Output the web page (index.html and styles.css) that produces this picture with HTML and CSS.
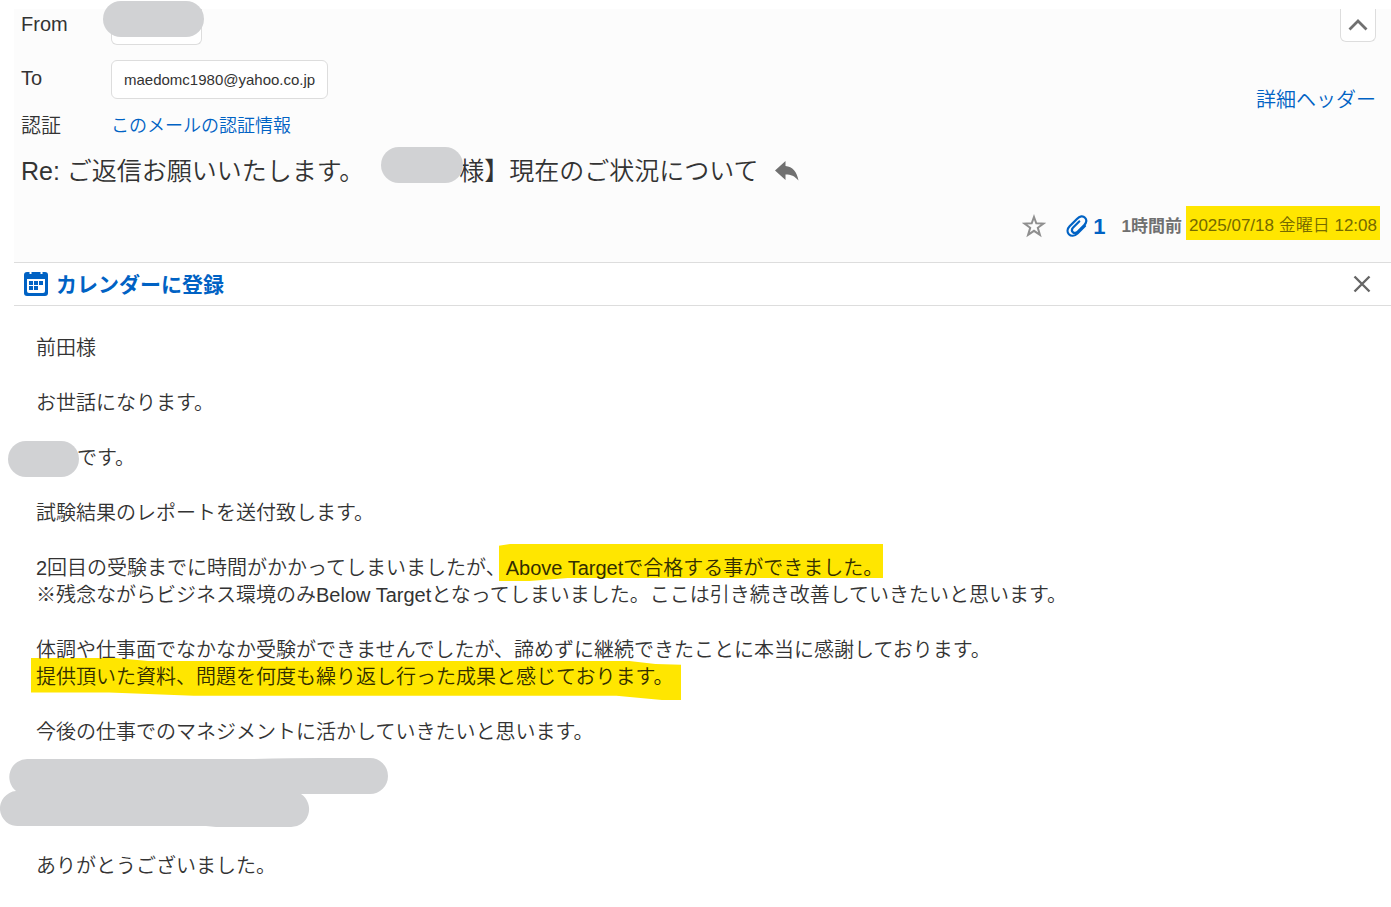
FILE: index.html
```html
<!DOCTYPE html>
<html lang="ja">
<head>
    <meta charset="UTF-8">
    <meta name="viewport" content="width=device-width, initial-scale=1.0">
    <title>メール</title>
    <link rel="stylesheet" href="styles.css">
</head>
<body>
    <main class="mail">
        <header class="mail-header">
            <div class="header-top">
                <div class="fields">
                    <div class="field field-from">
                        <span class="label">From</span>
                        <span class="chip chip-hidden"><span class="mask mask-from"></span></span>
                    </div>
                    <div class="field field-to">
                        <span class="label">To</span>
                        <span class="chip">maedomc1980@yahoo.co.jp</span>
                    </div>
                    <div class="field">
                        <span class="label">認証</span>
                        <a class="auth-link" href="#">このメールの認証情報</a>
                    </div>
                </div>
                <div class="header-side">
                    <button class="collapse" type="button" aria-label="閉じる">
                        <svg width="20" height="12" viewBox="0 0 20 12"><path d="M1.500 10.500 10 2l8.500 8.500" fill="none" stroke="#707070" stroke-width="2.800"/></svg>
                    </button>
                    <a class="detail-link" href="#">詳細ヘッダー</a>
                </div>
            </div>

            <h1 class="subject">
                <span>Re: ご返信お願いいたします。</span>
                <span class="mask mask-subject"></span>
                <span>様】現在のご状況について</span>
                <svg class="reply" width="24" height="20" viewBox="0 0 24 20"><path d="M0 9.500 10.500 0v5C17.500 5.500 22 11 23.500 19.500 19.500 15 16 13.500 10.500 13.500V19z" fill="#707070"/></svg>
            </h1>

            <div class="meta">
                <button class="star" type="button" aria-label="スター">
                    <svg width="24" height="24" viewBox="0 0 24 24"><path d="M12 3 14.300 9.300 21.500 9.600 15.800 13.800 17.900 20.800 12 16.800 6.100 20.800 8.200 13.800 2.500 9.600 9.700 9.300z" fill="none" stroke="#8f8f8f" stroke-width="2"/></svg>
                </button>
                <span class="attach">
                    <svg width="22" height="22" viewBox="0 0 22 22"><path d="M19 11 11.500 18.500C8.500 21.400 4.900 21.300 2.900 19.200.9 17 1.200 13.800 3.600 11.300L10.900 3.900C13.700 1 17 .6 19 2.700c2 2 1.700 4.900-.7 7.300l-6.500 6.500c-1.700 1.700-3.700 1.900-5 .6-1.300-1.300-1-3.200.6-4.800l5.800-5.900" fill="none" stroke="#0062c4" stroke-width="2.200" stroke-linecap="round"/></svg>
                    <span>1</span>
                </span>
                <span class="ago">1時間前</span>
                <time class="date" datetime="2025-07-18T12:08">2025/07/18 金曜日 12:08</time>
            </div>
        </header>

        <div class="calendar-bar">
            <a class="calendar-link" href="#">
                <svg width="24" height="24" viewBox="0 0 24 24">
                    <rect width="24" height="24" rx="3" fill="#0062c4"/>
                    <path d="M5.500 0h2v2h-2zM16.500 0h2v2h-2z" fill="#fff"/>
                    <path d="M3 7h18v12q0 2-2 2H5q-2 0-2-2z" fill="#fff"/>
                    <path d="M5 9h4v4H5zM10 9h4v4h-4zM15 9h4v4h-4zM5 14h4v4H5zM10 14h4v4h-4z" fill="#0062c4"/>
                </svg>
                カレンダーに登録
            </a>
            <button class="close" type="button" aria-label="閉じる">
                <svg width="18" height="18" viewBox="0 0 18 18"><path d="M1.500 1.500l15 15M16.500 1.500l-15 15" fill="none" stroke="#666" stroke-width="2.400"/></svg>
            </button>
        </div>

        <article class="mail-body">
            <p>前田様</p>
            <p>お世話になります。</p>
            <p class="sender"><span class="mask mask-name"></span>です。</p>
            <p>試験結果のレポートを送付致します。</p>
            <p>2回目の受験までに時間がかかってしまいましたが、<mark class="marker marker-result">Above Targetで合格する事ができました。</mark><br>
            ※残念ながらビジネス環境のみBelow Targetとなってしまいました。ここは引き続き改善していきたいと思います。</p>
            <p>体調や仕事面でなかなか受験ができませんでしたが、諦めずに継続できたことに本当に感謝しております。<br>
            <mark class="marker marker-thanks">提供頂いた資料、問題を何度も繰り返し行った成果と感じております。</mark></p>
            <p>今後の仕事でのマネジメントに活かしていきたいと思います。</p>
            <svg class="signature" width="387" height="69" viewBox="0 0 387 69" aria-hidden="true">
                <path d="M27 1H250Q290 0 320 0H369a18 18 0 0 1 0 36H300A18 18 0 0 1 289 69H215L205 68H18A17.500 17.500 0 0 1 15 33 18 18 0 0 1 27 1z" fill="#d1d2d4"/>
            </svg>
            <p>ありがとうございました。</p>
        </article>
    </main>
</body>
</html>
```

FILE: styles.css
```css
* {
    box-sizing: border-box;
}
body {
    margin: 0;
    background-color: #fff;
    color: #333;
    font-family: "Liberation Sans", "Noto Sans CJK JP", sans-serif;
    font-size: 20px;
    font-weight: 350;
    line-height: 27px;
}
a {
    color: #0062c4;
    text-decoration: none;
}
p {
    margin: 0;
}
button {
    padding: 0;
    border: none;
    background: none;
    cursor: pointer;
}
svg {
    display: block;
}
.mail {
    padding: 9px 0 0 14px;
}

/* ヘッダー */
.mail-header {
    padding: 0 11px 22px 7px;
    background-color: #fcfcfc;
}
.header-top {
    display: flex;
    justify-content: space-between;
}
.field {
    display: flex;
    align-items: center;
    height: 30px;
}
.field-from {
    align-items: flex-start;
    height: 36px;
    margin-bottom: 15px;
}
.field-from .label {
    margin-top: 2px;
}
.field-to {
    height: 39px;
    margin-bottom: 12px;
}
.field-to .label {
    margin-bottom: 3px;
}
.label {
    width: 90px;
}
.chip {
    height: 39px;
    padding: 0 12px;
    border: 1px solid #ddd;
    border-radius: 6px;
    background-color: #fff;
    font-size: 15px;
    line-height: 38px;
}
.chip-hidden {
    position: relative;
    width: 91px;
    height: 36px;
    border-top: none;
    border-radius: 0 0 6px 6px;
}
.auth-link {
    font-size: 18px;
}
.header-side {
    display: flex;
    flex-direction: column;
    align-items: flex-end;
    padding-right: 4px;
}
.collapse {
    display: flex;
    align-items: center;
    justify-content: center;
    width: 36px;
    height: 33px;
    margin-bottom: 45px;
    border: 1px solid #ddd;
    border-top: none;
    border-radius: 0 0 6px 6px;
    background-color: #fff;
}
.subject {
    display: flex;
    align-items: center;
    height: 40px;
    margin: 10px 0 0;
    font-size: 25px;
    font-weight: 350;
    line-height: 40px;
    white-space: nowrap;
}
.reply {
    margin-left: 16px;
}
.meta {
    display: flex;
    align-items: center;
    justify-content: flex-end;
    height: 34px;
    margin-top: 15px;
    padding-top: 6px;
    color: #707070;
    font-size: 17px;
}
.attach {
    display: flex;
    align-items: center;
    gap: 5px;
    margin: 0 16px 0 20px;
    color: #0062c4;
    font-size: 22px;
    font-weight: bold;
}
.ago {
    margin-right: 4px;
    font-weight: bold;
}
.date {
    margin-top: -6px;
    padding: 6px 3px 0;
    background-color: #ffe600;
    color: #756a00;
    line-height: 28px;
}

/* 伏せ字 */
.mask {
    flex: none;
    height: 36px;
    border-radius: 18px;
    background-color: #d1d2d4;
}
.mask-from {
    position: absolute;
    top: -8px;
    left: -9px;
    width: 101px;
}
.mask-subject {
    z-index: 1;
    width: 82px;
    margin: -12px -4px 0 17px;
}
.mask-name {
    width: 71px;
    margin: 0 -2px 0 -28px;
}

/* カレンダー登録バー */
.calendar-bar {
    display: flex;
    align-items: center;
    justify-content: space-between;
    height: 44px;
    padding: 0 20px 0 10px;
    border-top: 1px solid #ddd;
    border-bottom: 1px solid #ddd;
}
.calendar-link {
    display: flex;
    align-items: center;
    gap: 8px;
    font-size: 21px;
    font-weight: bold;
}

/* 本文 */
.mail-body {
    display: flex;
    flex-direction: column;
    gap: 28px;
    padding: 29px 22px;
    isolation: isolate;
}
.sender {
    display: flex;
    align-items: center;
    height: 27px;
}
.marker {
    position: relative;
    background: none;
    color: #332e00;
}
/* 蛍光ペンは前後の行の文字より下に敷く */
.marker::before {
    content: "";
    position: absolute;
    z-index: -1;
    background-color: #ffe600;
}
.marker-result::before {
    inset: -13px 0 -2px -7px;
    clip-path: polygon(0 5%, 3% 0, 100% 0, 100% 92%, 18% 92%, 8% 100%, 0 100%);
}
.marker-thanks::before {
    inset: -8px -8px -12px -5px;
    clip-path: polygon(0 0, 13% 0, 18% 7%, 92% 7%, 96% 14%, 100% 16%, 100% 100%, 97% 100%, 90% 90%, 25% 90%, 12% 82%, 0 82%);
}
.signature {
    margin: -16px 0 -2px -35px;
    overflow: visible;
}
```
